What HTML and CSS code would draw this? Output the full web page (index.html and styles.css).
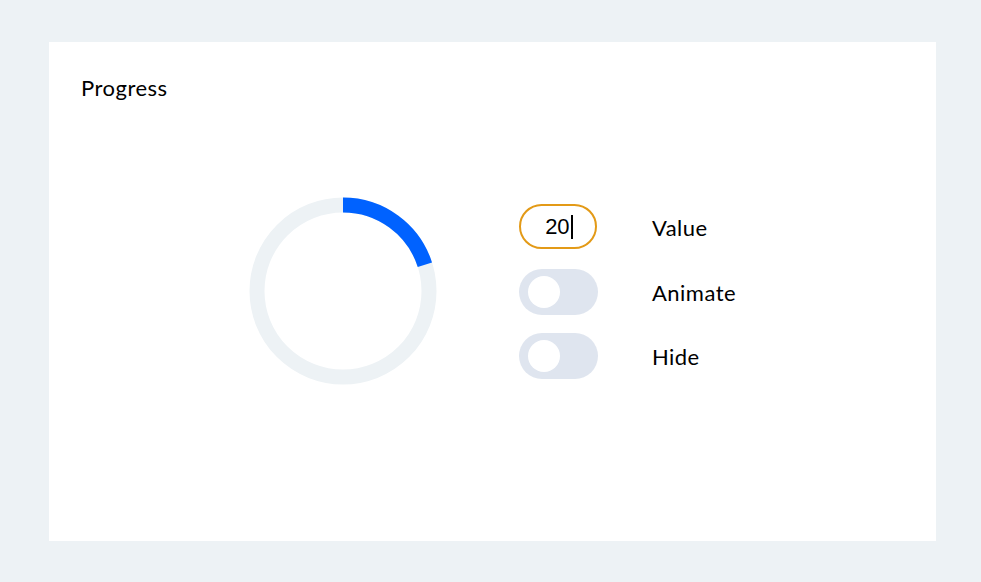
FILE: index.html
```html
<!DOCTYPE html>
<html>
<head>
<meta charset="utf-8">
<link rel="stylesheet" href="styles.css">
</head>
<body>
<div class="card">
  <h2 class="title">Progress</h2>
  <div class="body">
    <svg class="ring" width="188" height="188" viewBox="0 0 188 188">
      <circle cx="94" cy="94" r="86" fill="none" stroke="#edf2f5" stroke-width="15"/>
      <circle cx="94" cy="94" r="86" fill="none" stroke="#0062ff" stroke-width="15"
        stroke-dasharray="108.07 432.28" transform="rotate(-90 94 94)"/>
    </svg>
    <div class="controls">
      <div class="field"><span class="num">20</span><span class="caret"></span></div>
      <span class="label">Value</span>
      <div class="toggle"><span class="knob"></span></div>
      <span class="label">Animate</span>
      <div class="toggle"><span class="knob"></span></div>
      <span class="label">Hide</span>
    </div>
  </div>
</div>
</body>
</html>
```
FILE: styles.css
```css
html, body {
  margin: 0;
  padding: 0;
}
body {
  background: #edf2f5;
  font-family: Lato, "Open Sans", sans-serif;
  color: #000;
  width: 981px;
  height: 582px;
  padding: 42px 0 0 49px;
  box-sizing: border-box;
}
.card {
  background: #fff;
  width: 887px;
  height: 499px;
  box-sizing: border-box;
  padding: 32px;
  display: grid;
  grid-template: 1fr / 1fr;
}
.title {
  grid-area: 1 / 1;
  align-self: start;
  margin: 0;
  font-size: 22px;
  font-weight: 400;
  line-height: 28px;
  letter-spacing: 0.5px;
}
.body {
  grid-area: 1 / 1;
  align-self: center;
  display: flex;
  justify-content: center;
  align-items: center;
  gap: 82px;
  margin-top: -2px;
}
.ring {
  display: block;
}
.controls {
  display: grid;
  grid-template-columns: 79px auto;
  grid-template-rows: 47px 46px 46px;
  column-gap: 54px;
  row-gap: 18px;
  align-items: center;
  margin-top: 2px;
}
.field {
  align-self: start;
  box-sizing: border-box;
  height: 45px;
  width: 78px;
  border: 2px solid #e39a17;
  border-radius: 23px;
  display: flex;
  align-items: center;
  justify-content: center;
  font-family: "Liberation Sans", Arial, sans-serif;
  font-size: 22px;
  padding-left: 2px;
}
.caret {
  display: inline-block;
  width: 2px;
  height: 24px;
  background: #000;
  margin-left: 1px;
}
.toggle {
  box-sizing: border-box;
  height: 46px;
  width: 79px;
  border-radius: 23px;
  background: #dfe5ef;
  display: flex;
  align-items: center;
  padding-left: 9px;
}
.knob {
  width: 32px;
  height: 32px;
  border-radius: 50%;
  background: #fff;
}
.label {
  font-size: 22px;
  line-height: 28px;
  letter-spacing: 0.5px;
  padding-top: 1px;
}
```
